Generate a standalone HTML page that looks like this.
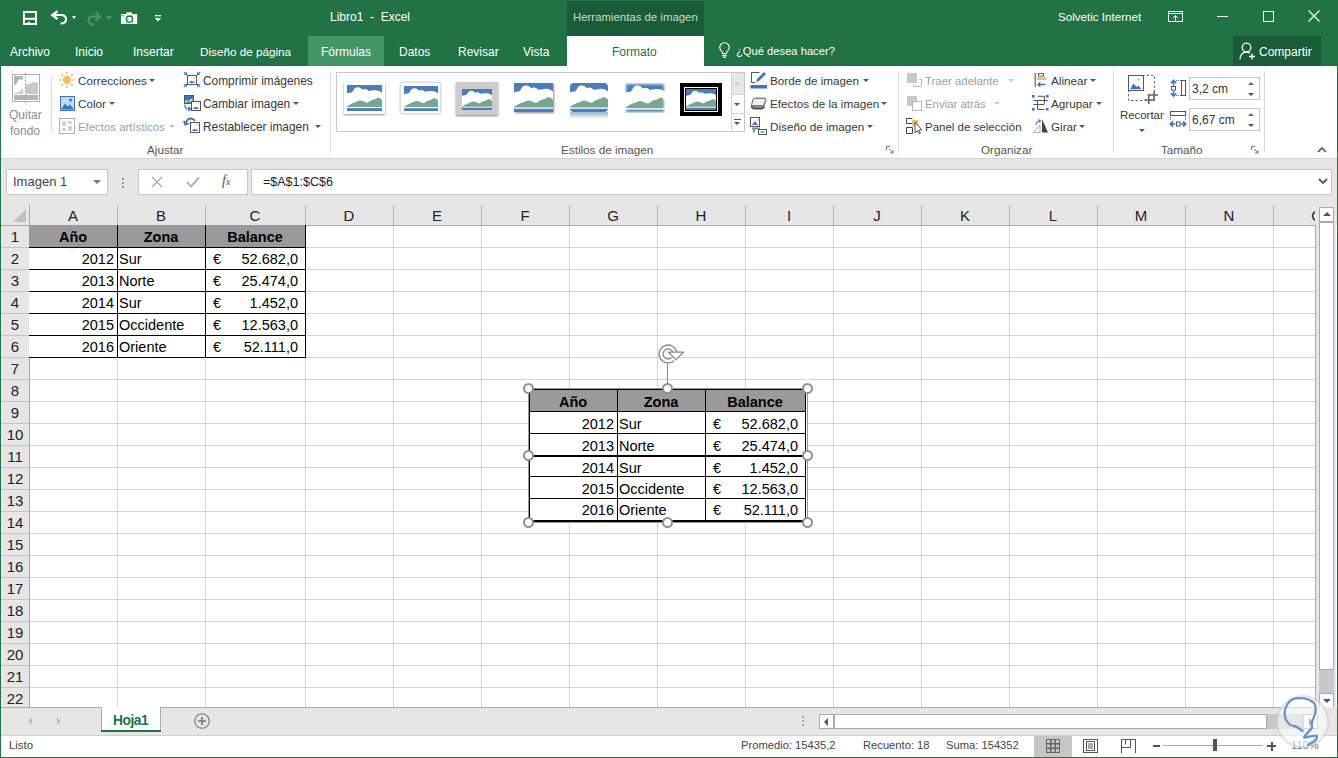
<!DOCTYPE html>
<html><head><meta charset="utf-8">
<style>
*{margin:0;padding:0;box-sizing:border-box}
html,body{width:1338px;height:758px;overflow:hidden;background:#fff;font-family:"Liberation Sans",sans-serif}
.a{position:absolute;white-space:nowrap}
svg.a{overflow:visible}
.tt{color:#fff;font-size:12px;line-height:16px}
.tab{color:#fff;font-size:12px;line-height:16px;top:44px}
.rb{color:#383838;font-size:11.7px;line-height:16px}
.dis{color:#9e9e9e}
.gl{color:#555;font-size:11.7px;line-height:16px;top:142px}
.sep{background:#dadada;width:1px}
.car{width:0;height:0;border-left:3px solid transparent;border-right:3px solid transparent;border-top:3px solid #555}
.hd{font-size:15px;line-height:20px;color:#222;text-align:center}
.cl{font-size:14.5px;line-height:22px;color:#000}
.cb{font-size:14.5px;line-height:22px;color:#000;font-weight:bold}
.sb{color:#444;font-size:11.2px;line-height:16px;top:737px}
</style></head><body>
<!-- ===== TITLE BAR ===== -->
<div class="a" style="left:0;top:0;width:1338px;height:66px;background:#217346"></div>
<div class="a" style="left:567px;top:1px;width:137px;height:35px;background:#1a5c37"></div>
<div class="a tt" style="left:573px;top:9px;color:#c8dccf;font-size:11.4px">Herramientas de imagen</div>
<div class="a" style="left:567px;top:36px;width:137px;height:30px;background:#fff"></div>
<div class="a" style="left:308px;top:36px;width:76px;height:30px;background:#439467"></div>
<div class="a tt" style="left:330px;top:9px">Libro1&nbsp; -&nbsp; Excel</div>
<div class="a tt" style="left:1058px;top:9px;font-size:11.6px">Solvetic Internet</div>

<!-- QAT icons -->
<svg class="a" style="left:23px;top:11px" width="14" height="14" viewBox="0 0 14 14">
 <path d="M1 1h12v12H1z" fill="none" stroke="#fff" stroke-width="2"/>
 <path d="M1 7.8h12" stroke="#fff" stroke-width="2.1"/>
 <rect x="4.8" y="10.8" width="2.3" height="3" fill="#fff"/>
</svg>
<svg class="a" style="left:51px;top:10px" width="16" height="16" viewBox="0 0 16 16">
 <path d="M2 5.1H9.5C13 5.1 15 7 15 9.3 15 11.8 13 13.6 9.5 13.6" fill="none" stroke="#fff" stroke-width="2"/>
 <path d="M6.5 1.2L1.3 5.1l5.2 3.9" fill="none" stroke="#fff" stroke-width="2.3"/>
</svg>
<div class="a car" style="left:72px;top:16px;border-top-color:#fff;border-left-width:2.7px;border-right-width:2.7px;border-top-width:3px"></div>
<svg class="a" style="left:86px;top:10px" width="16" height="16" viewBox="0 0 16 16">
 <path d="M13.5 6.5h-7a4 4 0 0 0 0 8h2" fill="none" stroke="#4e9a6c" stroke-width="1.9"/>
 <path d="M9.5 2.2L14 6.5l-4.5 4.3" fill="none" stroke="#4e9a6c" stroke-width="1.9"/>
</svg>
<div class="a car" style="left:106px;top:16px;border-top-color:#4e9a6c;border-left-width:3.5px;border-right-width:3.5px;border-top-width:4px"></div>
<svg class="a" style="left:121px;top:12px" width="17" height="12" viewBox="0 0 17 12">
 <path d="M0 2h5.5V0.3h5.5V2H16.2v10H0z" fill="#f0f0f0"/>
 <rect x="5.6" y="4.3" width="5.8" height="5.8" rx="1.6" fill="none" stroke="#217346" stroke-width="1.4"/>
 <rect x="1.2" y="3" width="1.2" height="1.2" fill="#217346"/>
</svg>
<svg class="a" style="left:154px;top:14px" width="8" height="8" viewBox="0 0 8 8"><rect x="1" y="1" width="6" height="1.3" fill="#fff"/><path d="M0.8 4h6.4L4 7.6z" fill="#fff"/></svg>


<!-- window controls -->
<svg class="a" style="left:1168px;top:11px" width="15" height="11" viewBox="0 0 15 11">
 <rect x="0.5" y="0.5" width="14" height="10" fill="none" stroke="#fff" stroke-width="1"/>
 <line x1="0.5" y1="2.5" x2="14.5" y2="2.5" stroke="#fff"/>
 <path d="M7.5 9.5v-5M5 7l2.5-2.5L10 7" fill="none" stroke="#fff"/>
</svg>
<div class="a" style="left:1217px;top:16px;width:11px;height:1px;background:#fff"></div>
<div class="a" style="left:1263px;top:11px;width:11px;height:11px;border:1px solid #fff"></div>
<svg class="a" style="left:1308px;top:10px" width="12" height="12" viewBox="0 0 12 12">
 <path d="M0.5 0.5l11 11M11.5 0.5l-11 11" stroke="#fff" stroke-width="1.1"/>
</svg>

<!-- tabs -->
<div class="a tab" style="left:10px">Archivo</div>
<div class="a tab" style="left:75px">Inicio</div>
<div class="a tab" style="left:133px">Insertar</div>
<div class="a tab" style="left:200px;font-size:11.7px">Diseño de página</div>
<div class="a tab" style="left:321px">Fórmulas</div>
<div class="a tab" style="left:399px">Datos</div>
<div class="a tab" style="left:458px">Revisar</div>
<div class="a tab" style="left:523px">Vista</div>
<div class="a tab" style="left:612px;color:#217346">Formato</div>
<svg class="a" style="left:719px;top:43px" width="11" height="15" viewBox="0 0 11 15">
 <path d="M3.6 10.5c0-2-2.9-3.2-2.9-6a4.8 4.8 0 0 1 9.6 0c0 2.8-2.9 4-2.9 6z" fill="none" stroke="#fff" stroke-width="1.1"/>
 <path d="M3.4 12.3h4.2M3.8 14.2h3.4" stroke="#fff" stroke-width="1.2"/>
</svg>
<div class="a tab" style="left:736px;top:43px;font-size:11.2px">¿Qué desea hacer?</div>
<div class="a" style="left:1233px;top:36px;width:88px;height:30px;background:#1a5c37"></div>
<svg class="a" style="left:1239px;top:42px" width="17" height="18" viewBox="0 0 17 18">
 <circle cx="7.5" cy="5.5" r="4.3" fill="none" stroke="#fff" stroke-width="1.3"/>
 <path d="M1 17.5c0-5 3-7.5 6.5-7.5 1.5 0 2.5 0.4 3.5 1" fill="none" stroke="#fff" stroke-width="1.3"/>
 <path d="M13 11.5v6M10 14.5h6" stroke="#fff" stroke-width="1.3"/>
</svg>
<div class="a tab" style="left:1259px;font-size:12px">Compartir</div>

<!-- ===== RIBBON ===== -->
<div class="a" style="left:1px;top:66px;width:1336px;height:92px;background:#fff"></div>
<div class="a" style="left:1px;top:158px;width:1336px;height:1px;background:#d4d4d4"></div>
<div class="a" style="left:1px;top:159px;width:1336px;height:66px;background:#e6e6e6"></div>
<!-- Ajustar group -->
<svg class="a" style="left:11px;top:73px" width="30" height="32" viewBox="0 0 30 32">
 <rect x="1.5" y="1.5" width="27" height="27" fill="#fff" stroke="#b0b0b0" stroke-width="1"/>
 <path d="M3 3h9v4c-2-1-4-1-5 1s-2 4-4 4z" fill="#b4b4b4"/>
 <path d="M3 20c3 0 6-1 8-4l1-1v6H3z" fill="#d0d0d0"/>
 <path d="M15 11c2 0 3 1 4 0s2-2 4-2 3 1 4 1v11H15z" fill="#c8c8c8"/>
 <rect x="3" y="22" width="24" height="5" fill="#b4b4b4"/>
 <line x1="14.5" y1="0" x2="14.5" y2="32" stroke="#a0a0a0" stroke-width="1" stroke-dasharray="2 1.5"/>
</svg>
<div class="a rb dis" style="left:9px;top:107px;color:#8c8c8c;font-size:12px">Quitar</div>
<div class="a rb dis" style="left:10px;top:123px;color:#8c8c8c;font-size:12px">fondo</div>
<div class="a sep" style="left:51px;top:76px;height:56px"></div>

<svg class="a" style="left:59px;top:72px" width="16" height="16" viewBox="0 0 16 16">
 <circle cx="8" cy="8" r="4.2" fill="#efbd6b"/>
 <g stroke="#efbd6b" stroke-width="1.6" stroke-linecap="round">
 <path d="M8 0.8v1.2M8 14v1.2M0.8 8h1.2M14 8h1.2M2.9 2.9l0.8 0.8M12.3 12.3l0.8 0.8M2.9 13.1l0.8-0.8M12.3 3.7l0.8-0.8"/></g>
</svg>
<div class="a rb" style="left:78px;top:73px">Correcciones</div>
<div class="a car" style="left:149px;top:79px"></div>
<svg class="a" style="left:60px;top:96px" width="15" height="15" viewBox="0 0 15 15">
 <rect x="0.5" y="0.5" width="14" height="14" fill="#c6d9f1" stroke="#3b74c0" stroke-width="1"/>
 <path d="M1 13.5l4-6 3 3 2-2 4 5z" fill="#3b74c0"/>
 <circle cx="10.5" cy="4" r="1.6" fill="#3b74c0"/>
</svg>
<div class="a rb" style="left:78px;top:96px">Color</div>
<div class="a car" style="left:109px;top:102px"></div>
<svg class="a" style="left:59px;top:118px" width="16" height="16" viewBox="0 0 16 16">
 <rect x="0.5" y="0.5" width="15" height="15" fill="#fff" stroke="#b0b0b0"/>
 <path d="M3 3h4v5H3zM9 3h4v3H9zM3 10h4v3H3zM9 8h4v5H9z" fill="#d4d4d4"/>
</svg>
<div class="a rb dis" style="left:78px;top:119px;font-size:11.4px">Efectos artísticos</div>
<div class="a car" style="left:169px;top:125px;border-top-color:#c0c0c0"></div>

<svg class="a" style="left:183px;top:71px" width="18" height="17" viewBox="0 0 18 17">
 <rect x="4.5" y="4.5" width="9" height="9" fill="#fff" stroke="#555"/>
 <path d="M6 12l2-2.5 1.3 1.2 1-0.8 1.7 2.1z" fill="#3b74c0"/>
 <rect x="10.5" y="6" width="1.4" height="1.4" fill="#efbd6b"/>
 <g stroke="#3b74c0" stroke-width="1.1" fill="none"><path d="M0.8 0.8l2.4 2.4M17.2 0.8l-2.4 2.4M0.8 16.2l2.4-2.4M17.2 16.2l-2.4-2.4"/>
 <path d="M1.2 3.5h2.3V1.2M16.8 3.5h-2.3V1.2M1.2 13.5h2.3v2.3M16.8 13.5h-2.3v2.3"/></g>
</svg>
<div class="a rb" style="left:203px;top:73px;font-size:11.9px">Comprimir imágenes</div>
<svg class="a" style="left:183px;top:94px" width="18" height="17" viewBox="0 0 18 17">
 <rect x="1.5" y="1.5" width="9" height="8" fill="#fff" stroke="#555"/>
 <path d="M2 9l3-3 3 1.5 2-3V9z" fill="#6aa17a"/>
 <path d="M2 2h8v2.5c-1 0-2 1-3 1.5S4 6 2 7z" fill="#3b74c0"/>
 <rect x="8.5" y="7.5" width="9" height="9" fill="#fff" stroke="#555"/>
 <path d="M10 15l2-2.5 1.3 1.2 1-0.8 1.7 2.1z" fill="#3b74c0"/>
 <rect x="14.5" y="9" width="1.4" height="1.4" fill="#efbd6b"/>
 <path d="M2.3 10.5c-1 2 0 4.5 3 4.5h2" fill="none" stroke="#3b74c0" stroke-width="1.3"/>
 <path d="M5.5 12.8L7.6 15l-2.1 2" fill="none" stroke="#3b74c0" stroke-width="1.3"/>
</svg>
<div class="a rb" style="left:203px;top:96px;font-size:11.9px">Cambiar imagen</div>
<div class="a car" style="left:293px;top:102px"></div>
<svg class="a" style="left:183px;top:117px" width="18" height="17" viewBox="0 0 18 17">
 <rect x="7.5" y="5.5" width="9" height="10" fill="#fff" stroke="#555"/>
 <path d="M9 14l2-2.5 1.3 1.2 1-0.8 1.7 2.1z" fill="#3b74c0"/>
 <rect x="13.5" y="7" width="1.4" height="1.4" fill="#efbd6b"/>
 <path d="M2.5 6.5C3.5 3 6 1.5 8 1.5s3 1 4 2.5" fill="none" stroke="#3b74c0" stroke-width="1.8"/>
 <path d="M0.8 3.8L2.2 7.8l3.8-1.5" fill="none" stroke="#3b74c0" stroke-width="1.6"/>
</svg>
<div class="a rb" style="left:203px;top:119px;font-size:11.9px">Restablecer imagen</div>
<div class="a car" style="left:315px;top:125px"></div>
<div class="a gl" style="left:147px">Ajustar</div>
<div class="a sep" style="left:330px;top:71px;height:82px"></div>

<!-- Estilos de imagen gallery -->
<div class="a" style="left:336px;top:72px;width:409px;height:60px;border:1px solid #c6c6c6;background:#fff"></div>
<div class="a" style="left:731px;top:72px;width:14px;height:60px;border-left:1px solid #d4d4d4"></div>
<div class="a" style="left:732px;top:73px;width:12px;height:21px;background:#e6e6e6"></div>
<div class="a" style="left:731px;top:94px;width:14px;height:1px;background:#d4d4d4"></div>
<div class="a" style="left:731px;top:113px;width:14px;height:1px;background:#d4d4d4"></div>
<div class="a car" style="left:734px;top:82px;border-top:none;border-bottom:3px solid #c8c8c8"></div>
<div class="a car" style="left:734px;top:103px"></div>
<div class="a" style="left:734px;top:119px;width:7px;height:1px;background:#555"></div>
<div class="a car" style="left:734px;top:122px"></div>
<div class="a" style="left:344px;top:82px;width:41px;height:32px;background:#fff;box-shadow:0 1px 2px rgba(0,0,0,0.45)"></div>
<svg class="a" style="left:347px;top:85px" width="35" height="26" viewBox="0 0 36 27" preserveAspectRatio="none"><rect width="36" height="27" fill="#fff"/><path d="M0 0H36V8C34 6 31 5 28 5.5 26 5.8 24 6 22 6.2 21 4.5 18 3.5 16 5 14 2 10 1.5 8 3.5 6.5 5 6 8 4 8 2 8 1 8.5 0 9Z" fill="#4a7ebb"/><path d="M0 22.8V22.3C2 21 4 19.5 7 18.5 10 17.5 12 16 14 16.2 17 16.8 19 18.5 21 18.5 23 17 25 15.5 28 15 30 14.5 31 13 32 13 34 13.5 35 14.5 36 15.5V22.8Z" fill="#78a692"/><rect y="24" width="36" height="3" fill="#4a7ebb"/></svg>
<div class="a" style="left:400px;top:82px;width:41px;height:32px;background:#fff;border:1px solid #ddd;border-radius:3px;box-shadow:0 0 2px rgba(0,0,0,0.3)"></div>
<svg class="a" style="left:404px;top:86px" width="34" height="25" viewBox="0 0 36 27" preserveAspectRatio="none"><rect width="36" height="27" fill="#fff"/><path d="M0 0H36V8C34 6 31 5 28 5.5 26 5.8 24 6 22 6.2 21 4.5 18 3.5 16 5 14 2 10 1.5 8 3.5 6.5 5 6 8 4 8 2 8 1 8.5 0 9Z" fill="#4a7ebb"/><path d="M0 22.8V22.3C2 21 4 19.5 7 18.5 10 17.5 12 16 14 16.2 17 16.8 19 18.5 21 18.5 23 17 25 15.5 28 15 30 14.5 31 13 32 13 34 13.5 35 14.5 36 15.5V22.8Z" fill="#78a692"/><rect y="24" width="36" height="3" fill="#4a7ebb"/></svg>
<div class="a" style="left:456px;top:82px;width:42px;height:33px;background:#cdcdcd;box-shadow:0 1px 2px rgba(0,0,0,0.5)"></div>
<svg class="a" style="left:462px;top:89px" width="30" height="21" viewBox="0 0 36 27" preserveAspectRatio="none"><rect width="36" height="27" fill="#fff"/><path d="M0 0H36V8C34 6 31 5 28 5.5 26 5.8 24 6 22 6.2 21 4.5 18 3.5 16 5 14 2 10 1.5 8 3.5 6.5 5 6 8 4 8 2 8 1 8.5 0 9Z" fill="#4a7ebb"/><path d="M0 22.8V22.3C2 21 4 19.5 7 18.5 10 17.5 12 16 14 16.2 17 16.8 19 18.5 21 18.5 23 17 25 15.5 28 15 30 14.5 31 13 32 13 34 13.5 35 14.5 36 15.5V22.8Z" fill="#78a692"/><rect y="24" width="36" height="3" fill="#4a7ebb"/></svg>
<div class="a" style="left:514px;top:83px;width:39px;height:29px;box-shadow:1px 1px 2px rgba(0,0,0,0.45)"></div>
<svg class="a" style="left:514px;top:83px" width="39" height="29" viewBox="0 0 36 27" preserveAspectRatio="none"><rect width="36" height="27" fill="#fff"/><path d="M0 0H36V8C34 6 31 5 28 5.5 26 5.8 24 6 22 6.2 21 4.5 18 3.5 16 5 14 2 10 1.5 8 3.5 6.5 5 6 8 4 8 2 8 1 8.5 0 9Z" fill="#4a7ebb"/><path d="M0 22.8V22.3C2 21 4 19.5 7 18.5 10 17.5 12 16 14 16.2 17 16.8 19 18.5 21 18.5 23 17 25 15.5 28 15 30 14.5 31 13 32 13 34 13.5 35 14.5 36 15.5V22.8Z" fill="#78a692"/><rect y="24" width="36" height="3" fill="#4a7ebb"/></svg>
<div class="a" style="left:570px;top:112px;width:38px;height:7px;background:linear-gradient(#9fb9da 0,#b9d0d8 40%,#dfe9e6 70%,#fff 100%);border-radius:0 0 4px 4px"></div>
<div class="a" style="left:570px;top:83px;width:38px;height:29px;border-radius:4px;overflow:hidden"><svg class="a" style="left:0px;top:0px" width="38" height="29" viewBox="0 0 36 27" preserveAspectRatio="none"><rect width="36" height="27" fill="#fff"/><path d="M0 0H36V8C34 6 31 5 28 5.5 26 5.8 24 6 22 6.2 21 4.5 18 3.5 16 5 14 2 10 1.5 8 3.5 6.5 5 6 8 4 8 2 8 1 8.5 0 9Z" fill="#4a7ebb"/><path d="M0 22.8V22.3C2 21 4 19.5 7 18.5 10 17.5 12 16 14 16.2 17 16.8 19 18.5 21 18.5 23 17 25 15.5 28 15 30 14.5 31 13 32 13 34 13.5 35 14.5 36 15.5V22.8Z" fill="#78a692"/><rect y="24" width="36" height="3" fill="#4a7ebb"/></svg></div>
<svg class="a" style="left:625px;top:83px" width="40" height="30" viewBox="0 0 36 27" preserveAspectRatio="none"><rect width="36" height="27" fill="#fff"/><path d="M0 0H36V8C34 6 31 5 28 5.5 26 5.8 24 6 22 6.2 21 4.5 18 3.5 16 5 14 2 10 1.5 8 3.5 6.5 5 6 8 4 8 2 8 1 8.5 0 9Z" fill="#4a7ebb"/><path d="M0 22.8V22.3C2 21 4 19.5 7 18.5 10 17.5 12 16 14 16.2 17 16.8 19 18.5 21 18.5 23 17 25 15.5 28 15 30 14.5 31 13 32 13 34 13.5 35 14.5 36 15.5V22.8Z" fill="#78a692"/><rect y="24" width="36" height="3" fill="#4a7ebb"/></svg>
<div class="a" style="left:624px;top:82px;width:42px;height:32px;box-shadow:inset 0 0 3px 2px #fff"></div>
<div class="a" style="left:680px;top:83px;width:42px;height:33px;background:#000"></div>
<div class="a" style="left:684px;top:87px;width:34px;height:25px;border:1px solid #fff"></div>
<svg class="a" style="left:686px;top:89px" width="30" height="21" viewBox="0 0 36 27" preserveAspectRatio="none"><rect width="36" height="27" fill="#fff"/><path d="M0 0H36V8C34 6 31 5 28 5.5 26 5.8 24 6 22 6.2 21 4.5 18 3.5 16 5 14 2 10 1.5 8 3.5 6.5 5 6 8 4 8 2 8 1 8.5 0 9Z" fill="#4a7ebb"/><path d="M0 22.8V22.3C2 21 4 19.5 7 18.5 10 17.5 12 16 14 16.2 17 16.8 19 18.5 21 18.5 23 17 25 15.5 28 15 30 14.5 31 13 32 13 34 13.5 35 14.5 36 15.5V22.8Z" fill="#78a692"/><rect y="24" width="36" height="3" fill="#4a7ebb"/></svg>

<div class="a gl" style="left:561px">Estilos de imagen</div>
<svg class="a" style="left:886px;top:146px" width="8" height="8" viewBox="0 0 8 8"><path d="M0.5 4V0.5H4M3 3l4 4M7 4v3H4" fill="none" stroke="#777" stroke-width="1"/></svg>

<svg class="a" style="left:750px;top:71px" width="18" height="18" viewBox="0 0 18 18">
 <path d="M5 11.5H1.5V1.5h8" fill="none" stroke="#555" stroke-width="1"/>
 <path d="M6 11l1-3 7-7 2 2-7 7z" fill="#3b74c0"/>
 <rect x="0.5" y="14" width="16.5" height="3.5" fill="#3b74c0"/>
</svg>
<div class="a rb" style="left:770px;top:73px">Borde de imagen</div>
<div class="a car" style="left:863px;top:79px"></div>
<svg class="a" style="left:750px;top:96px" width="18" height="16" viewBox="0 0 18 16">
 <path d="M1.2 9.5L2.8 4C3.3 2.5 4 1.8 5.5 1.8h8.5c1.8 0 2.8 1.2 2.2 3l-1.5 5.5c-0.5 1.6-1.5 2.5-3 2.5H3.5C2 12.8 0.8 11.5 1.2 9.5z" fill="#9a9a9a"/>
 <path d="M1.6 8.5L3 4C3.4 2.8 4 2.3 5.3 2.3h8.7c1.4 0 2 0.9 1.6 2.2L14 8.5c-0.3 1-1 1.3-2 1.3H2.8C1.8 9.8 1.3 9.3 1.6 8.5z" fill="#f0f0f0" stroke="#555" stroke-width="0.9"/>
 <path d="M1.5 9.8c0.2 1.6 1 2.8 2.8 2.8h7.5c1.4 0 2.2-0.7 2.6-2" fill="none" stroke="#555" stroke-width="1.6"/>
</svg>
<div class="a rb" style="left:770px;top:96px">Efectos de la imagen</div>
<div class="a car" style="left:881px;top:102px"></div>
<svg class="a" style="left:750px;top:117px" width="17" height="18" viewBox="0 0 17 18">
 <rect x="0.5" y="0.5" width="9" height="9" fill="#fff" stroke="#555"/>
 <path d="M2 8l3-4 3 4z" fill="#3b74c0"/>
 <circle cx="7.5" cy="3" r="1" fill="#efbd6b"/>
 <path d="M2 10.5h8v2H5v3H3v-3H2z" fill="#6aa17a"/>
 <rect x="8.5" y="12.5" width="8" height="5" fill="#fff" stroke="#555"/>
 <line x1="10.5" y1="15" x2="14.5" y2="15" stroke="#555"/>
</svg>
<div class="a rb" style="left:770px;top:119px">Diseño de imagen</div>
<div class="a car" style="left:867px;top:125px"></div>
<div class="a sep" style="left:898px;top:71px;height:82px"></div>

<!-- Organizar -->
<svg class="a" style="left:906px;top:72px" width="16" height="16" viewBox="0 0 16 16">
 <rect x="1" y="1" width="10" height="10" fill="#c8c8c8"/>
 <path d="M13 7.5h2.5v7h-8v-2" fill="none" stroke="#b8b8b8" stroke-width="1"/>
</svg>
<div class="a rb dis" style="left:925px;top:73px;font-size:11.4px">Traer adelante</div>
<div class="a car" style="left:1008px;top:79px;border-top-color:#c8c8c8"></div>
<svg class="a" style="left:906px;top:95px" width="16" height="16" viewBox="0 0 16 16">
 <rect x="1" y="1" width="10" height="10" fill="#c8c8c8"/>
 <rect x="6.5" y="6.5" width="9" height="9" fill="#fff" stroke="#b8b8b8"/>
</svg>
<div class="a rb dis" style="left:925px;top:96px;font-size:11.4px">Enviar atrás</div>
<div class="a car" style="left:994px;top:102px;border-top-color:#c8c8c8"></div>
<svg class="a" style="left:905px;top:117px" width="18" height="18" viewBox="0 0 18 18">
 <path d="M7.5 1.5h-6v5h6M1.5 10.5h6v6h-6z" fill="none" stroke="#444"/>
 <rect x="7" y="3" width="6" height="6" fill="#efbd6b"/>
 <path d="M10 5v11l2.3-2.3 1.8 3.3 1.4-0.8-1.8-3.2h3.3z" fill="#fff" stroke="#444" stroke-width="0.9"/>
</svg>
<div class="a rb" style="left:925px;top:119px;font-size:11.5px">Panel de selección</div>

<svg class="a" style="left:1034px;top:72px" width="14" height="17" viewBox="0 0 14 17">
 <path d="M1.2 1v14" stroke="#555" stroke-width="1.1"/>
 <rect x="4.5" y="1.5" width="5" height="2.5" fill="#fff" stroke="#555" stroke-width="0.9"/>
 <rect x="3" y="5" width="9" height="3" fill="#efbd6b"/>
 <path d="M11.5 12.5H4M6.3 10.2L4 12.5l2.3 2.3" fill="none" stroke="#3b74c0" stroke-width="1.3"/>
</svg>
<div class="a rb" style="left:1051px;top:73px">Alinear</div>
<div class="a car" style="left:1090px;top:79px"></div>
<svg class="a" style="left:1032px;top:95px" width="17" height="16" viewBox="0 0 17 16">
 <g fill="#3b74c0"><rect x="0" y="0" width="2.6" height="2.6"/><rect x="14" y="0" width="2.6" height="2.6"/><rect x="0" y="13" width="2.6" height="2.6"/><rect x="14" y="13" width="2.6" height="2.6"/></g>
 <path d="M5.5 1.3h7v7.5M1.3 5.5h14.5M5.5 5.5v9h7M1.3 9.5h11" fill="none" stroke="#555" stroke-width="1"/>
</svg>
<div class="a rb" style="left:1051px;top:96px">Agrupar</div>
<div class="a car" style="left:1096px;top:102px"></div>
<svg class="a" style="left:1033px;top:119px" width="16" height="14" viewBox="0 0 16 14">
 <path d="M0.5 13.5L7 6v7.5z" fill="none" stroke="#aaa"/>
 <path d="M9 0v13.5h6z" fill="#444"/>
 <path d="M3 6c0-3 2-4 4-4" fill="none" stroke="#3b74c0" stroke-width="1.1"/>
 <path d="M5.5 0.5L7.5 2 5.5 3.5" fill="none" stroke="#3b74c0" stroke-width="1.1"/>
</svg>
<div class="a rb" style="left:1051px;top:119px">Girar</div>
<div class="a car" style="left:1079px;top:125px"></div>
<div class="a gl" style="left:981px">Organizar</div>
<div class="a sep" style="left:1113px;top:71px;height:82px"></div>

<!-- Tamaño -->
<svg class="a" style="left:1126px;top:73px" width="34" height="33" viewBox="0 0 34 33">
 <rect x="2.5" y="2.5" width="26" height="25" fill="none" stroke="#6a6a6a" stroke-dasharray="2.5 2"/>
 <rect x="2.5" y="2.5" width="15" height="15" fill="#fff" stroke="#555"/>
 <path d="M4 16.2L7.5 10.5l3.2 3.6 1.6-1.6 3.4 3.7z" fill="#3b74c0"/>
 <circle cx="12.5" cy="6.5" r="1.3" fill="#efbd6b"/>
 <path d="M28 18.2v9M21.5 22h10.5M22.8 22v9M18.5 27h9.5" fill="none" stroke="#666" stroke-width="1.6"/>
</svg>
<div class="a rb" style="left:1120px;top:107px;font-size:11.4px">Recortar</div>
<div class="a car" style="left:1139px;top:129px"></div>

<svg class="a" style="left:1169px;top:79px" width="18" height="18" viewBox="0 0 18 18">
 <path d="M4.5 1.5v5M1.8 4.2L4.5 1.3 7.2 4.2M4.5 12v5M1.8 14.3L4.5 17.2 7.2 14.3" fill="none" stroke="#3b74c0" stroke-width="1.6"/>
 <rect x="2.5" y="7.5" width="4" height="3.5" fill="#fff" stroke="#555" stroke-width="1"/>
 <path d="M7 1.5h5M7 16.5h5" stroke="#666" stroke-dasharray="1 1"/>
 <rect x="12.5" y="1.5" width="4" height="15" fill="#fff" stroke="#555"/>
</svg>
<div class="a" style="left:1189px;top:77px;width:71px;height:23px;border:1px solid #c6c6c6;background:#fff"></div>
<div class="a rb" style="left:1192px;top:81px;font-size:12px;color:#333">3,2 cm</div>
<div class="a car" style="left:1248px;top:82px;border-top:none;border-bottom:3px solid #666"></div>
<div class="a car" style="left:1248px;top:93px"></div>
<svg class="a" style="left:1169px;top:110px" width="18" height="18" viewBox="0 0 18 18">
 <rect x="1.5" y="1.5" width="15" height="4" fill="#fff" stroke="#555"/>
 <path d="M1.5 7v4M16.5 7v4" stroke="#666" stroke-dasharray="1 1"/>
 <path d="M1.3 14h5M4 11.3L1.2 14 4 16.7M11.7 14h5M14 11.3l2.8 2.7-2.8 2.7" fill="none" stroke="#3b74c0" stroke-width="1.6"/>
 <rect x="7.5" y="12" width="3.5" height="4" fill="#fff" stroke="#555" stroke-width="1"/>
</svg>
<div class="a" style="left:1189px;top:108px;width:71px;height:23px;border:1px solid #c6c6c6;background:#fff"></div>
<div class="a rb" style="left:1192px;top:112px;font-size:12px;color:#333">6,67 cm</div>
<div class="a car" style="left:1248px;top:113px;border-top:none;border-bottom:3px solid #666"></div>
<div class="a car" style="left:1248px;top:124px"></div>
<div class="a gl" style="left:1161px">Tamaño</div>
<svg class="a" style="left:1251px;top:146px" width="8" height="8" viewBox="0 0 8 8"><path d="M0.5 4V0.5H4M3 3l4 4M7 4v3H4" fill="none" stroke="#777" stroke-width="1"/></svg>
<div class="a sep" style="left:1264px;top:71px;height:82px"></div>
<svg class="a" style="left:1317px;top:146px" width="10" height="7" viewBox="0 0 10 7"><path d="M1 6l4-4 4 4" fill="none" stroke="#555" stroke-width="1.6"/></svg>


<!-- ===== FORMULA BAR ===== -->
<div class="a" style="left:6px;top:169px;width:102px;height:26px;background:#fff;border:1px solid #c6c6c6"></div>
<div class="a" style="left:13px;top:174px;font-size:13px;line-height:16px;color:#444">Imagen 1</div>
<div class="a car" style="left:93px;top:180px;border-left-width:4px;border-right-width:4px;border-top-width:4px;border-top-color:#777"></div>
<div class="a" style="left:122px;top:178px;width:2px;height:2px;background:#999"></div>
<div class="a" style="left:122px;top:182px;width:2px;height:2px;background:#999"></div>
<div class="a" style="left:122px;top:186px;width:2px;height:2px;background:#999"></div>
<div class="a" style="left:138px;top:169px;width:110px;height:26px;background:#fff;border:1px solid #c6c6c6"></div>
<svg class="a" style="left:151px;top:176px" width="12" height="12" viewBox="0 0 12 12"><path d="M1 1l10 10M11 1L1 11" stroke="#aaa" stroke-width="1.3"/></svg>
<svg class="a" style="left:186px;top:176px" width="14" height="12" viewBox="0 0 14 12"><path d="M1 6l4 4.5L13 1.5" fill="none" stroke="#b5b5b5" stroke-width="2"/></svg>
<div class="a" style="left:222px;top:172px;font-family:'Liberation Serif',serif;font-style:italic;font-size:14px;line-height:18px;color:#555">f<span style="font-size:10px">x</span></div>
<div class="a" style="left:251px;top:169px;width:1081px;height:26px;background:#fff;border:1px solid #c6c6c6"></div>
<div class="a" style="left:263px;top:174px;font-size:12.5px;line-height:16px;color:#222">=$A$1:$C$6</div>
<svg class="a" style="left:1318px;top:178px" width="10" height="7" viewBox="0 0 10 7"><path d="M1 1l4 4 4-4" fill="none" stroke="#555" stroke-width="1.8"/></svg>

<!-- ===== GRID ===== -->
<div class="a" style="left:30px;top:225px;width:1285px;height:482px;background:#fff"></div>
<div class="a" style="left:1px;top:225px;width:28px;height:482px;background:#e6e6e6"></div>
<div class="a" style="left:30px;top:247px;width:1285px;height:1px;background:#d4d4d4"></div>
<div class="a" style="left:1px;top:247px;width:28px;height:1px;background:#c4c4c4"></div>
<div class="a" style="left:30px;top:269px;width:1285px;height:1px;background:#d4d4d4"></div>
<div class="a" style="left:1px;top:269px;width:28px;height:1px;background:#c4c4c4"></div>
<div class="a" style="left:30px;top:291px;width:1285px;height:1px;background:#d4d4d4"></div>
<div class="a" style="left:1px;top:291px;width:28px;height:1px;background:#c4c4c4"></div>
<div class="a" style="left:30px;top:313px;width:1285px;height:1px;background:#d4d4d4"></div>
<div class="a" style="left:1px;top:313px;width:28px;height:1px;background:#c4c4c4"></div>
<div class="a" style="left:30px;top:335px;width:1285px;height:1px;background:#d4d4d4"></div>
<div class="a" style="left:1px;top:335px;width:28px;height:1px;background:#c4c4c4"></div>
<div class="a" style="left:30px;top:357px;width:1285px;height:1px;background:#d4d4d4"></div>
<div class="a" style="left:1px;top:357px;width:28px;height:1px;background:#c4c4c4"></div>
<div class="a" style="left:30px;top:379px;width:1285px;height:1px;background:#d4d4d4"></div>
<div class="a" style="left:1px;top:379px;width:28px;height:1px;background:#c4c4c4"></div>
<div class="a" style="left:30px;top:401px;width:1285px;height:1px;background:#d4d4d4"></div>
<div class="a" style="left:1px;top:401px;width:28px;height:1px;background:#c4c4c4"></div>
<div class="a" style="left:30px;top:423px;width:1285px;height:1px;background:#d4d4d4"></div>
<div class="a" style="left:1px;top:423px;width:28px;height:1px;background:#c4c4c4"></div>
<div class="a" style="left:30px;top:445px;width:1285px;height:1px;background:#d4d4d4"></div>
<div class="a" style="left:1px;top:445px;width:28px;height:1px;background:#c4c4c4"></div>
<div class="a" style="left:30px;top:467px;width:1285px;height:1px;background:#d4d4d4"></div>
<div class="a" style="left:1px;top:467px;width:28px;height:1px;background:#c4c4c4"></div>
<div class="a" style="left:30px;top:489px;width:1285px;height:1px;background:#d4d4d4"></div>
<div class="a" style="left:1px;top:489px;width:28px;height:1px;background:#c4c4c4"></div>
<div class="a" style="left:30px;top:511px;width:1285px;height:1px;background:#d4d4d4"></div>
<div class="a" style="left:1px;top:511px;width:28px;height:1px;background:#c4c4c4"></div>
<div class="a" style="left:30px;top:533px;width:1285px;height:1px;background:#d4d4d4"></div>
<div class="a" style="left:1px;top:533px;width:28px;height:1px;background:#c4c4c4"></div>
<div class="a" style="left:30px;top:555px;width:1285px;height:1px;background:#d4d4d4"></div>
<div class="a" style="left:1px;top:555px;width:28px;height:1px;background:#c4c4c4"></div>
<div class="a" style="left:30px;top:577px;width:1285px;height:1px;background:#d4d4d4"></div>
<div class="a" style="left:1px;top:577px;width:28px;height:1px;background:#c4c4c4"></div>
<div class="a" style="left:30px;top:599px;width:1285px;height:1px;background:#d4d4d4"></div>
<div class="a" style="left:1px;top:599px;width:28px;height:1px;background:#c4c4c4"></div>
<div class="a" style="left:30px;top:621px;width:1285px;height:1px;background:#d4d4d4"></div>
<div class="a" style="left:1px;top:621px;width:28px;height:1px;background:#c4c4c4"></div>
<div class="a" style="left:30px;top:643px;width:1285px;height:1px;background:#d4d4d4"></div>
<div class="a" style="left:1px;top:643px;width:28px;height:1px;background:#c4c4c4"></div>
<div class="a" style="left:30px;top:665px;width:1285px;height:1px;background:#d4d4d4"></div>
<div class="a" style="left:1px;top:665px;width:28px;height:1px;background:#c4c4c4"></div>
<div class="a" style="left:30px;top:687px;width:1285px;height:1px;background:#d4d4d4"></div>
<div class="a" style="left:1px;top:687px;width:28px;height:1px;background:#c4c4c4"></div>
<div class="a" style="left:117px;top:225px;width:1px;height:482px;background:#d4d4d4"></div>
<div class="a" style="left:117px;top:205px;width:1px;height:20px;background:#b4b4b4"></div>
<div class="a" style="left:205px;top:225px;width:1px;height:482px;background:#d4d4d4"></div>
<div class="a" style="left:205px;top:205px;width:1px;height:20px;background:#b4b4b4"></div>
<div class="a" style="left:305px;top:225px;width:1px;height:482px;background:#d4d4d4"></div>
<div class="a" style="left:305px;top:205px;width:1px;height:20px;background:#b4b4b4"></div>
<div class="a" style="left:393px;top:225px;width:1px;height:482px;background:#d4d4d4"></div>
<div class="a" style="left:393px;top:205px;width:1px;height:20px;background:#b4b4b4"></div>
<div class="a" style="left:481px;top:225px;width:1px;height:482px;background:#d4d4d4"></div>
<div class="a" style="left:481px;top:205px;width:1px;height:20px;background:#b4b4b4"></div>
<div class="a" style="left:569px;top:225px;width:1px;height:482px;background:#d4d4d4"></div>
<div class="a" style="left:569px;top:205px;width:1px;height:20px;background:#b4b4b4"></div>
<div class="a" style="left:657px;top:225px;width:1px;height:482px;background:#d4d4d4"></div>
<div class="a" style="left:657px;top:205px;width:1px;height:20px;background:#b4b4b4"></div>
<div class="a" style="left:745px;top:225px;width:1px;height:482px;background:#d4d4d4"></div>
<div class="a" style="left:745px;top:205px;width:1px;height:20px;background:#b4b4b4"></div>
<div class="a" style="left:833px;top:225px;width:1px;height:482px;background:#d4d4d4"></div>
<div class="a" style="left:833px;top:205px;width:1px;height:20px;background:#b4b4b4"></div>
<div class="a" style="left:921px;top:225px;width:1px;height:482px;background:#d4d4d4"></div>
<div class="a" style="left:921px;top:205px;width:1px;height:20px;background:#b4b4b4"></div>
<div class="a" style="left:1009px;top:225px;width:1px;height:482px;background:#d4d4d4"></div>
<div class="a" style="left:1009px;top:205px;width:1px;height:20px;background:#b4b4b4"></div>
<div class="a" style="left:1097px;top:225px;width:1px;height:482px;background:#d4d4d4"></div>
<div class="a" style="left:1097px;top:205px;width:1px;height:20px;background:#b4b4b4"></div>
<div class="a" style="left:1185px;top:225px;width:1px;height:482px;background:#d4d4d4"></div>
<div class="a" style="left:1185px;top:205px;width:1px;height:20px;background:#b4b4b4"></div>
<div class="a" style="left:1273px;top:225px;width:1px;height:482px;background:#d4d4d4"></div>
<div class="a" style="left:1273px;top:205px;width:1px;height:20px;background:#b4b4b4"></div>
<div class="a" style="left:29px;top:205px;width:1286px;height:20px;overflow:hidden">
<div class="a hd" style="left:0px;top:1px;width:88px">A</div>
<div class="a hd" style="left:88px;top:1px;width:88px">B</div>
<div class="a hd" style="left:176px;top:1px;width:100px">C</div>
<div class="a hd" style="left:276px;top:1px;width:88px">D</div>
<div class="a hd" style="left:364px;top:1px;width:88px">E</div>
<div class="a hd" style="left:452px;top:1px;width:88px">F</div>
<div class="a hd" style="left:540px;top:1px;width:88px">G</div>
<div class="a hd" style="left:628px;top:1px;width:88px">H</div>
<div class="a hd" style="left:716px;top:1px;width:88px">I</div>
<div class="a hd" style="left:804px;top:1px;width:88px">J</div>
<div class="a hd" style="left:892px;top:1px;width:88px">K</div>
<div class="a hd" style="left:980px;top:1px;width:88px">L</div>
<div class="a hd" style="left:1068px;top:1px;width:88px">M</div>
<div class="a hd" style="left:1156px;top:1px;width:88px">N</div>
<div class="a hd" style="left:1244px;top:1px;width:88px">O</div>
</div>
<div class="a" style="left:1px;top:225px;width:1315px;height:1px;background:#ababab"></div>
<div class="a" style="left:29px;top:205px;width:1px;height:502px;background:#ababab"></div>
<div class="a" style="left:1315px;top:225px;width:1px;height:482px;background:#ababab"></div>
<div class="a" style="left:13px;top:209px;width:0;height:0;border-left:13px solid transparent;border-bottom:13px solid #c0c0c0"></div>
<div class="a hd" style="left:1px;top:226px;width:28px;line-height:22px">1</div>
<div class="a hd" style="left:1px;top:248px;width:28px;line-height:22px">2</div>
<div class="a hd" style="left:1px;top:270px;width:28px;line-height:22px">3</div>
<div class="a hd" style="left:1px;top:292px;width:28px;line-height:22px">4</div>
<div class="a hd" style="left:1px;top:314px;width:28px;line-height:22px">5</div>
<div class="a hd" style="left:1px;top:336px;width:28px;line-height:22px">6</div>
<div class="a hd" style="left:1px;top:358px;width:28px;line-height:22px">7</div>
<div class="a hd" style="left:1px;top:380px;width:28px;line-height:22px">8</div>
<div class="a hd" style="left:1px;top:402px;width:28px;line-height:22px">9</div>
<div class="a hd" style="left:1px;top:424px;width:28px;line-height:22px">10</div>
<div class="a hd" style="left:1px;top:446px;width:28px;line-height:22px">11</div>
<div class="a hd" style="left:1px;top:468px;width:28px;line-height:22px">12</div>
<div class="a hd" style="left:1px;top:490px;width:28px;line-height:22px">13</div>
<div class="a hd" style="left:1px;top:512px;width:28px;line-height:22px">14</div>
<div class="a hd" style="left:1px;top:534px;width:28px;line-height:22px">15</div>
<div class="a hd" style="left:1px;top:556px;width:28px;line-height:22px">16</div>
<div class="a hd" style="left:1px;top:578px;width:28px;line-height:22px">17</div>
<div class="a hd" style="left:1px;top:600px;width:28px;line-height:22px">18</div>
<div class="a hd" style="left:1px;top:622px;width:28px;line-height:22px">19</div>
<div class="a hd" style="left:1px;top:644px;width:28px;line-height:22px">20</div>
<div class="a hd" style="left:1px;top:666px;width:28px;line-height:22px">21</div>
<div class="a hd" style="left:1px;top:688px;width:28px;line-height:22px">22</div>
<div class="a" style="left:29px;top:225px;width:276px;height:132px;background:#fff"></div>
<div class="a" style="left:29px;top:225px;width:276px;height:22px;background:#9a9a9a"></div>
<div class="a" style="left:29px;top:247px;width:277px;height:1px;background:#000"></div>
<div class="a" style="left:29px;top:269px;width:277px;height:1px;background:#000"></div>
<div class="a" style="left:29px;top:291px;width:277px;height:1px;background:#000"></div>
<div class="a" style="left:29px;top:313px;width:277px;height:1px;background:#000"></div>
<div class="a" style="left:29px;top:335px;width:277px;height:1px;background:#000"></div>
<div class="a" style="left:29px;top:357px;width:277px;height:1px;background:#000"></div>
<div class="a" style="left:117px;top:225px;width:1px;height:133px;background:#000"></div>
<div class="a" style="left:205px;top:225px;width:1px;height:133px;background:#000"></div>
<div class="a" style="left:305px;top:225px;width:1px;height:133px;background:#000"></div>
<div class="a cb" style="left:29px;top:226px;width:88px;text-align:center">Año</div>
<div class="a cb" style="left:117px;top:226px;width:88px;text-align:center">Zona</div>
<div class="a cb" style="left:205px;top:226px;width:100px;text-align:center">Balance</div>
<div class="a cl" style="left:29px;top:248px;width:85px;text-align:right">2012</div>
<div class="a cl" style="left:119px;top:248px">Sur</div>
<div class="a cl" style="left:213px;top:248px">€</div>
<div class="a cl" style="left:205px;top:248px;width:93px;text-align:right">52.682,0</div>
<div class="a cl" style="left:29px;top:270px;width:85px;text-align:right">2013</div>
<div class="a cl" style="left:119px;top:270px">Norte</div>
<div class="a cl" style="left:213px;top:270px">€</div>
<div class="a cl" style="left:205px;top:270px;width:93px;text-align:right">25.474,0</div>
<div class="a cl" style="left:29px;top:292px;width:85px;text-align:right">2014</div>
<div class="a cl" style="left:119px;top:292px">Sur</div>
<div class="a cl" style="left:213px;top:292px">€</div>
<div class="a cl" style="left:205px;top:292px;width:93px;text-align:right">1.452,0</div>
<div class="a cl" style="left:29px;top:314px;width:85px;text-align:right">2015</div>
<div class="a cl" style="left:119px;top:314px">Occidente</div>
<div class="a cl" style="left:213px;top:314px">€</div>
<div class="a cl" style="left:205px;top:314px;width:93px;text-align:right">12.563,0</div>
<div class="a cl" style="left:29px;top:336px;width:85px;text-align:right">2016</div>
<div class="a cl" style="left:119px;top:336px">Oriente</div>
<div class="a cl" style="left:213px;top:336px">€</div>
<div class="a cl" style="left:205px;top:336px;width:93px;text-align:right">52.111,0</div>
<div class="a" style="left:529px;top:389px;width:276px;height:131px;background:#fff"></div>
<div class="a" style="left:529px;top:389px;width:276px;height:22px;background:#9a9a9a"></div>
<div class="a" style="left:529px;top:389px;width:277px;height:1px;background:#000"></div>
<div class="a" style="left:529px;top:411px;width:277px;height:1px;background:#000"></div>
<div class="a" style="left:529px;top:433px;width:277px;height:1px;background:#000"></div>
<div class="a" style="left:529px;top:455px;width:277px;height:2px;background:#000"></div>
<div class="a" style="left:529px;top:476px;width:277px;height:1px;background:#000"></div>
<div class="a" style="left:529px;top:498px;width:277px;height:1px;background:#000"></div>
<div class="a" style="left:529px;top:520px;width:277px;height:2px;background:#000"></div>
<div class="a" style="left:529px;top:389px;width:1px;height:132px;background:#000"></div>
<div class="a" style="left:617px;top:389px;width:1px;height:132px;background:#000"></div>
<div class="a" style="left:705px;top:389px;width:1px;height:132px;background:#000"></div>
<div class="a" style="left:805px;top:389px;width:1px;height:132px;background:#000"></div>
<div class="a cb" style="left:529px;top:391px;width:88px;text-align:center">Año</div>
<div class="a cb" style="left:617px;top:391px;width:88px;text-align:center">Zona</div>
<div class="a cb" style="left:705px;top:391px;width:100px;text-align:center">Balance</div>
<div class="a cl" style="left:529px;top:413px;width:85px;text-align:right">2012</div>
<div class="a cl" style="left:619px;top:413px">Sur</div>
<div class="a cl" style="left:713px;top:413px">€</div>
<div class="a cl" style="left:705px;top:413px;width:93px;text-align:right">52.682,0</div>
<div class="a cl" style="left:529px;top:435px;width:85px;text-align:right">2013</div>
<div class="a cl" style="left:619px;top:435px">Norte</div>
<div class="a cl" style="left:713px;top:435px">€</div>
<div class="a cl" style="left:705px;top:435px;width:93px;text-align:right">25.474,0</div>
<div class="a cl" style="left:529px;top:457px;width:85px;text-align:right">2014</div>
<div class="a cl" style="left:619px;top:457px">Sur</div>
<div class="a cl" style="left:713px;top:457px">€</div>
<div class="a cl" style="left:705px;top:457px;width:93px;text-align:right">1.452,0</div>
<div class="a cl" style="left:529px;top:478px;width:85px;text-align:right">2015</div>
<div class="a cl" style="left:619px;top:478px">Occidente</div>
<div class="a cl" style="left:713px;top:478px">€</div>
<div class="a cl" style="left:705px;top:478px;width:93px;text-align:right">12.563,0</div>
<div class="a cl" style="left:529px;top:499px;width:85px;text-align:right">2016</div>
<div class="a cl" style="left:619px;top:499px">Oriente</div>
<div class="a cl" style="left:713px;top:499px">€</div>
<div class="a cl" style="left:705px;top:499px;width:93px;text-align:right">52.111,0</div>
<div class="a" style="left:528px;top:388px;width:280px;height:135px;border:1px solid #9a9a9a"></div>
<div class="a" style="left:667px;top:363px;width:1px;height:21px;background:#8c8c8c"></div>
<svg class="a" style="left:656px;top:342px" width="30" height="24" viewBox="0 0 30 24"><path d="M19 10.8A7 7 0 1 0 16.8 17.2" fill="none" stroke="#8c8c8c" stroke-width="5.2"/><path d="M19 10.8A7 7 0 1 0 16.8 17.2" fill="none" stroke="#fff" stroke-width="2.6"/><path d="M12.5 10.2h15L20 17.6z" fill="#fff" stroke="#8c8c8c" stroke-width="1.3" stroke-linejoin="round"/></svg>
<div class="a" style="left:523px;top:383px;width:11px;height:11px;border-radius:50%;background:#fff;border:2px solid #909090"></div>
<div class="a" style="left:523px;top:450px;width:11px;height:11px;border-radius:50%;background:#fff;border:2px solid #909090"></div>
<div class="a" style="left:523px;top:517px;width:11px;height:11px;border-radius:50%;background:#fff;border:2px solid #909090"></div>
<div class="a" style="left:662px;top:383px;width:11px;height:11px;border-radius:50%;background:#fff;border:2px solid #909090"></div>
<div class="a" style="left:662px;top:517px;width:11px;height:11px;border-radius:50%;background:#fff;border:2px solid #909090"></div>
<div class="a" style="left:802px;top:383px;width:11px;height:11px;border-radius:50%;background:#fff;border:2px solid #909090"></div>
<div class="a" style="left:802px;top:450px;width:11px;height:11px;border-radius:50%;background:#fff;border:2px solid #909090"></div>
<div class="a" style="left:802px;top:517px;width:11px;height:11px;border-radius:50%;background:#fff;border:2px solid #909090"></div>

<!-- ===== SHEET TABS / STATUS ===== -->
<!-- vertical scrollbar -->
<div class="a" style="left:1316px;top:205px;width:20px;height:503px;background:#e6e6e6"></div>
<div class="a" style="left:1319px;top:207px;width:15px;height:500px;background:#c8c8c8"></div>
<div class="a" style="left:1319px;top:207px;width:15px;height:15px;background:#fff;border:1px solid #ababab"></div>
<div class="a car" style="left:1323px;top:212px;border-top:none;border-bottom:4px solid #555;border-left-width:4px;border-right-width:4px"></div>
<div class="a" style="left:1319px;top:222px;width:15px;height:448px;background:#fff;border:1px solid #ababab"></div>
<div class="a" style="left:1319px;top:693px;width:15px;height:15px;background:#fff;border:1px solid #ababab"></div>
<div class="a car" style="left:1323px;top:699px;border-top-width:4px;border-top-color:#555;border-left-width:4px;border-right-width:4px"></div>

<!-- sheet tab bar -->
<div class="a" style="left:1px;top:707px;width:1336px;height:29px;background:#e6e6e6"></div>
<div class="a" style="left:1px;top:707px;width:1315px;height:1px;background:#ababab"></div>
<div class="a" style="left:1px;top:735px;width:1336px;height:1px;background:#d0d0d0"></div>
<div class="a" style="left:28px;top:717px;width:0;height:0;border-top:4px solid transparent;border-bottom:4px solid transparent;border-right:4px solid #c0c0c0"></div>
<div class="a" style="left:57px;top:717px;width:0;height:0;border-top:4px solid transparent;border-bottom:4px solid transparent;border-left:4px solid #c0c0c0"></div>
<div class="a" style="left:101px;top:707px;width:60px;height:25px;background:#fff;border-left:1px solid #ababab;border-right:1px solid #ababab"></div>
<div class="a" style="left:101px;top:730px;width:60px;height:2px;background:#217346"></div>
<div class="a" style="left:113px;top:712.5px;font-size:13.8px;letter-spacing:-0.5px;line-height:16px;font-weight:bold;color:#217346">Hoja1</div>
<svg class="a" style="left:194px;top:713px" width="16" height="16" viewBox="0 0 16 16">
 <circle cx="8" cy="8" r="7.3" fill="none" stroke="#777" stroke-width="1.1"/>
 <path d="M8 4v8M4 8h8" stroke="#777" stroke-width="1.6"/>
</svg>
<div class="a" style="left:802px;top:716px;width:2px;height:2px;background:#aaa"></div>
<div class="a" style="left:802px;top:720px;width:2px;height:2px;background:#aaa"></div>
<div class="a" style="left:802px;top:724px;width:2px;height:2px;background:#aaa"></div>
<!-- horizontal scrollbar -->
<div class="a" style="left:819px;top:714px;width:499px;height:15px;background:#c8c8c8"></div>
<div class="a" style="left:819px;top:714px;width:15px;height:15px;background:#fff;border:1px solid #ababab"></div>
<div class="a" style="left:824px;top:718px;width:0;height:0;border-top:4px solid transparent;border-bottom:4px solid transparent;border-right:4px solid #555"></div>
<div class="a" style="left:834px;top:714px;width:433px;height:15px;background:#fff;border:1px solid #ababab"></div>
<div class="a" style="left:1303px;top:714px;width:15px;height:15px;background:#fff;border:1px solid #ababab"></div>
<div class="a" style="left:1309px;top:718px;width:0;height:0;border-top:4px solid transparent;border-bottom:4px solid transparent;border-left:4px solid #555"></div>

<!-- status bar -->
<div class="a" style="left:1px;top:736px;width:1336px;height:21px;background:#fff"></div>
<div class="a sb" style="left:9px;font-size:11.4px">Listo</div>
<div class="a sb" style="left:741px">Promedio: 15435,2</div>
<div class="a sb" style="left:863px">Recuento: 18</div>
<div class="a sb" style="left:946px">Suma: 154352</div>
<div class="a" style="left:1034px;top:736px;width:38px;height:21px;background:#c6c6c6"></div>
<svg class="a" style="left:1046px;top:739px" width="14" height="14" viewBox="0 0 14 14">
 <g fill="#666"><rect x="0" y="0" width="14" height="14"/></g>
 <g fill="#c6c6c6"><rect x="1" y="1" width="3" height="3"/><rect x="5.5" y="1" width="3" height="3"/><rect x="10" y="1" width="3" height="3"/>
 <rect x="1" y="5.5" width="3" height="3"/><rect x="5.5" y="5.5" width="3" height="3"/><rect x="10" y="5.5" width="3" height="3"/>
 <rect x="1" y="10" width="3" height="3"/><rect x="5.5" y="10" width="3" height="3"/><rect x="10" y="10" width="3" height="3"/></g>
</svg>
<svg class="a" style="left:1083px;top:739px" width="15" height="14" viewBox="0 0 15 14">
 <rect x="0.5" y="0.5" width="14" height="13" fill="#fff" stroke="#555"/>
 <rect x="3.5" y="2.5" width="8" height="9" fill="#fff" stroke="#555"/>
 <path d="M5 5h5M5 7h5M5 9h5" stroke="#555"/>
</svg>
<svg class="a" style="left:1121px;top:739px" width="15" height="14" viewBox="0 0 15 14">
 <path d="M0.5 14V0.5h14V14M0.5 8.5h9v-8M4.5 0.5v5" fill="none" stroke="#555"/>
</svg>
<div class="a" style="left:1153px;top:745px;width:7px;height:2px;background:#555"></div>
<div class="a" style="left:1163px;top:745px;width:100px;height:1px;background:#aaa"></div>
<div class="a" style="left:1213px;top:739px;width:4px;height:12px;background:#555"></div>
<div class="a" style="left:1267px;top:745px;width:9px;height:2px;background:#555"></div>
<div class="a" style="left:1270.5px;top:741.5px;width:2px;height:9px;background:#555"></div>
<div class="a sb" style="left:1291px;color:#777">110%</div>

<!-- watermark -->
<svg class="a" style="left:1268px;top:688px" width="70" height="70" viewBox="0 0 70 70">
 <circle cx="34.6" cy="33.7" r="25.5" fill="rgba(255,255,255,0.55)" stroke="rgba(190,195,200,0.45)" stroke-width="2.2"/>
 <path d="M34.6 43C31 40 28 38 25 38 21 37 17 33 16.5 25 16.5 19 21 12 27 10.5 32 9.5 40 10 45 14 49 18 48 24 46 29 44 33 43 36 44 40 42 43 38 45 36 49.5 38 50 44 47 49 48 50 51 46 54 40 57" fill="none" stroke="#5a88c4" stroke-width="2.3" stroke-linecap="round" stroke-linejoin="round" opacity="0.9"/>
</svg>
<!-- window borders -->
<div class="a" style="left:0;top:66px;width:1px;height:692px;background:#217346"></div>
<div class="a" style="left:1337px;top:66px;width:1px;height:692px;background:#217346"></div>
<div class="a" style="left:0;top:757px;width:1338px;height:1px;background:#217346"></div>

</body></html>
